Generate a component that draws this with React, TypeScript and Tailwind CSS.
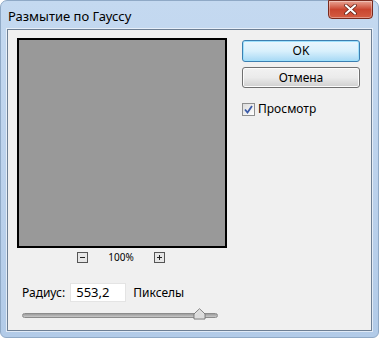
import React from 'react';

export default function App() {
  return (
    <div
      className="w-[379px] h-[338px] flex flex-col rounded-t-[7px] rounded-b-[6px] bg-gradient-to-b from-[#c4d9f0] via-[#bcd2ec] to-[#b2cbe8] border border-[#8fa9c6]"
      style={{ fontFamily: '"Noto Sans", "DejaVu Sans", sans-serif' }}
    >
      {/* Title bar */}
      <div className="h-[28px] flex items-start justify-between pl-[7px] pr-[5px]">
        <span className="mt-[7px] text-[13px] text-black leading-[16px]">Размытие по Гауссу</span>
        <div className="w-[45px] h-[19px] -mt-px rounded-b-[4px] border border-[#7a2a1d] bg-gradient-to-b from-[#e8a394] via-[#c9452f] to-[#d45c42] flex items-center justify-center shadow-[inset_0_0_0_1px_rgba(255,255,255,0.35)]">
          <svg width="13" height="11" viewBox="0 0 13 11">
            <path d="M2 1.5 L11 9.5 M11 1.5 L2 9.5" stroke="#5a1a10" strokeWidth="3.6" strokeLinecap="round" />
            <path d="M2 1.5 L11 9.5 M11 1.5 L2 9.5" stroke="#ffffff" strokeWidth="2.2" strokeLinecap="round" />
          </svg>
        </div>
      </div>

      {/* Client area */}
      <div className="mx-[6px] mb-[6px] flex-1 border border-[#6d7f94] bg-[#f0f0f0] shadow-[0_0_0_1px_rgba(255,255,255,0.6)]">
        <div className="flex pt-[8px] pl-[9px]">
          {/* Left column */}
          <div className="flex flex-col">
            <div className="w-[210px] h-[210px] border-2 border-black bg-[#999999]" />
            <div className="flex items-center justify-center h-[16px] mt-[1px] gap-[20px] pr-[2px]">
              <ZoomBox sign="minus" />
              <span className="text-[10px] text-black leading-none">100%</span>
              <ZoomBox sign="plus" />
            </div>
            <div className="flex items-center mt-[18px] pl-[5px]">
              <span className="text-[12px] text-black">Радиус:</span>
              <div className="ml-[5px] w-[56px] h-[19px] bg-white border border-[#e4e4e4] flex items-center pl-[5px]">
                <span className="text-[13px] text-black">553,2</span>
              </div>
              <span className="ml-[7px] text-[12px] text-black">Пикселы</span>
            </div>
            <div className="relative mt-[7px] ml-[5px] w-[196px] h-[12px] flex items-center">
              <div className="w-full h-[5px] rounded-full border border-[#8c8c8c] bg-gradient-to-b from-[#9c9c9c] to-[#c8c8c8]" />
              <svg className="absolute left-[171px] top-[-1px]" width="13" height="12" viewBox="0 0 13 12">
                <path d="M1 11 L1 6 L6.5 0.8 L12 6 L12 11 Z" fill="#ececec" stroke="#777" strokeWidth="1" />
                <path d="M2 10 L2 6.4 L6.5 2.2 L11 6.4 L11 10 Z" fill="#dcdcdc" />
              </svg>
            </div>
          </div>

          {/* Right column */}
          <div className="flex flex-col ml-[15px] pt-[2px]">
            <button className="w-[118px] h-[22px] rounded-[3px] border border-[#3c7fb1] bg-gradient-to-b from-[#eaf6fd] via-[#d9f0fc] to-[#a7d9f5] shadow-[inset_0_0_0_1px_#9ee0fc] text-[12px] text-black leading-none">
              OK
            </button>
            <button className="mt-[5px] w-[118px] h-[21px] rounded-[3px] border border-[#707070] bg-gradient-to-b from-[#f2f2f2] via-[#ebebeb] to-[#cfcfcf] shadow-[inset_0_0_0_1px_#fcfcfc] text-[12px] text-black leading-none">
              Отмена
            </button>
            <div className="flex items-center mt-[12px]">
              <div className="w-[13px] h-[13px] border border-[#8e8f8f] bg-gradient-to-br from-[#dcdcdc] to-[#ffffff] flex items-center justify-center">
                <svg width="9" height="9" viewBox="0 0 9 9">
                  <path d="M1 4.5 L3.5 7.5 L8 1" fill="none" stroke="#3a5aa8" strokeWidth="1.8" />
                </svg>
              </div>
              <span className="ml-[3px] text-[12px] text-black">Просмотр</span>
            </div>
          </div>
        </div>
      </div>
    </div>
  );
}

function ZoomBox({ sign }: { sign: 'minus' | 'plus' }) {
  return (
    <div className="w-[11px] h-[11px] border border-[#555] bg-[#e6e6e6] flex items-center justify-center">
      <svg width="7" height="7" viewBox="0 0 7 7">
        <path d="M1 3.5 H6" stroke="#222" strokeWidth="1" />
        {sign === 'plus' && <path d="M3.5 1 V6" stroke="#222" strokeWidth="1" />}
      </svg>
    </div>
  );
}
